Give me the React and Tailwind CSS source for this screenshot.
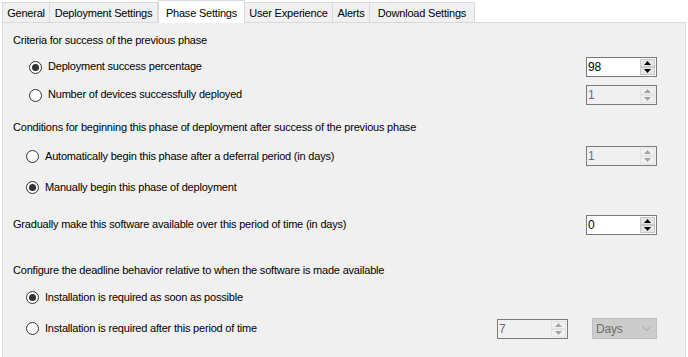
import React from "react";

const font = { fontFamily: '"Liberation Sans", Arial, sans-serif' };

function Radio({ checked }) {
  return (
    <span className="relative flex h-[13px] w-[13px] shrink-0 items-center justify-center rounded-full border border-[#333333] bg-white">
      {checked && <span className="h-[7px] w-[7px] rounded-full bg-[#333333]" />}
    </span>
  );
}

function Tri({ up, disabled }) {
  return (
    <svg width="7" height="4" viewBox="0 0 7 4" className="block">
      {up ? (
        <polygon points="0,4 7,4 3.5,0" fill={disabled ? "#a3a3a3" : "#000"} />
      ) : (
        <polygon points="0,0 7,0 3.5,4" fill={disabled ? "#a3a3a3" : "#000"} />
      )}
    </svg>
  );
}

function Spinner({ value, disabled }) {
  return (
    <div
      className={`flex h-[20px] w-[71px] shrink-0 border border-[#7a7a7a] ${
        disabled ? "bg-[#f0f0f0]" : "bg-white"
      }`}
    >
      <div
        className={`flex flex-1 items-center pl-[1px] text-[12px] leading-none ${
          disabled ? "text-[#6d6d6d]" : "text-black"
        }`}
      >
        {value}
      </div>
      <div className="flex w-[16px] flex-col py-[1px] pr-[1px]">
        <div
          className={`flex flex-1 items-center justify-center border ${
            disabled ? "border-[#e3e3e3] bg-[#f0f0f0]" : "border-[#c8c8c8] bg-[#e6e6e6]"
          }`}
        >
          <Tri up disabled={disabled} />
        </div>
        <div
          className={`flex flex-1 items-center justify-center border ${
            disabled ? "border-[#e3e3e3] bg-[#f0f0f0]" : "border-[#c8c8c8] bg-[#e6e6e6]"
          }`}
        >
          <Tri disabled={disabled} />
        </div>
      </div>
    </div>
  );
}

function Tab({ label, w, selected }) {
  if (selected) {
    return (
      <div
        className={`relative z-10 -mb-[1px] flex h-[23px] items-start justify-center whitespace-nowrap border border-b-0 border-[#d9d9d9] bg-white pt-[4px] text-black ${w}`}
      >
        {label}
      </div>
    );
  }
  return (
    <div
      className={`-ml-[1px] mt-[2px] flex h-[20px] items-center justify-center whitespace-nowrap border border-b-0 border-[#d9d9d9] bg-[#f0f0f0] pt-[1px] text-black first:ml-0 ${w}`}
    >
      {label}
    </div>
  );
}

export default function App() {
  return (
    <div
      className="h-[357px] w-[688px] overflow-hidden bg-white text-[11px] tracking-[-0.2px]"
      style={font}
    >
      <div className="flex h-[22px] items-start pl-[2px]">
        <Tab label="General" w="w-[48px]" />
        <Tab label="Deployment Settings" w="w-[109px]" />
        <Tab label="Phase Settings" w="w-[87px]" selected />
        <Tab label="User Experience" w="w-[89px]" />
        <Tab label="Alerts" w="w-[38px]" />
        <Tab label="Download Settings" w="w-[106px]" />
      </div>
      <div className="ml-[2px] h-[340px] w-[684px] border border-[#d9d9d9] bg-[#f0f0f0] pt-[7px] text-black">
        <div className="flex h-[20px] items-center whitespace-nowrap pl-[10px]">
          Criteria for success of the previous phase
        </div>

        <div className="mt-[7px] flex h-[20px] items-center whitespace-nowrap pl-[26px] pr-[28px]">
          <Radio checked />
          <span className="ml-[6px] -mt-[2px]">Deployment success percentage</span>
          <span className="flex-1" />
          <Spinner value="98" />
        </div>

        <div className="mt-[8px] flex h-[20px] items-center whitespace-nowrap pl-[26px] pr-[28px]">
          <Radio />
          <span className="ml-[6px] -mt-[2px]">Number of devices successfully deployed</span>
          <span className="flex-1" />
          <Spinner value="1" disabled />
        </div>

        <div className="mt-[12px] flex h-[20px] items-center whitespace-nowrap pl-[10px]">
          Conditions for beginning this phase of deployment after success of the previous phase
        </div>

        <div className="mt-[9px] flex h-[20px] items-center whitespace-nowrap pl-[23px] pr-[28px]">
          <Radio />
          <span className="ml-[6px]">Automatically begin this phase after a deferral period (in days)</span>
          <span className="flex-1" />
          <Spinner value="1" disabled />
        </div>

        <div className="mt-[11px] flex h-[20px] items-center whitespace-nowrap pl-[23px]">
          <Radio checked />
          <span className="ml-[6px]">Manually begin this phase of deployment</span>
        </div>

        <div className="mt-[18px] flex h-[20px] items-center whitespace-nowrap pl-[10px] pr-[28px]">
          <span className="-mt-[1px]">Gradually make this software available over this period of time (in days)</span>
          <span className="flex-1" />
          <Spinner value="0" />
        </div>

        <div className="mt-[25px] flex h-[20px] items-center whitespace-nowrap pl-[10px]">
          Configure the deadline behavior relative to when the software is made available
        </div>

        <div className="mt-[7px] flex h-[20px] items-center whitespace-nowrap pl-[23px]">
          <Radio checked />
          <span className="ml-[6px]">Installation is required as soon as possible</span>
        </div>

        <div className="mt-[11px] flex h-[21px] items-center whitespace-nowrap pl-[23px] pr-[28px]">
          <Radio />
          <span className="ml-[6px]">Installation is required after this period of time</span>
          <span className="flex-1" />
          <Spinner value="7" disabled />
          <div className="ml-[24px] flex h-[21px] w-[65px] items-center justify-between border border-[#bfbfbf] bg-[#cccccc] pl-[3px] pr-[5px] text-[12px] text-[#6d6d6d]">
            <span>Days</span>
            <svg width="9" height="5" viewBox="0 0 9 5">
              <polyline points="0.5,0.5 4.5,4.5 8.5,0.5" fill="none" stroke="#a6a6a6" strokeWidth="1" />
            </svg>
          </div>
        </div>
      </div>
    </div>
  );
}
